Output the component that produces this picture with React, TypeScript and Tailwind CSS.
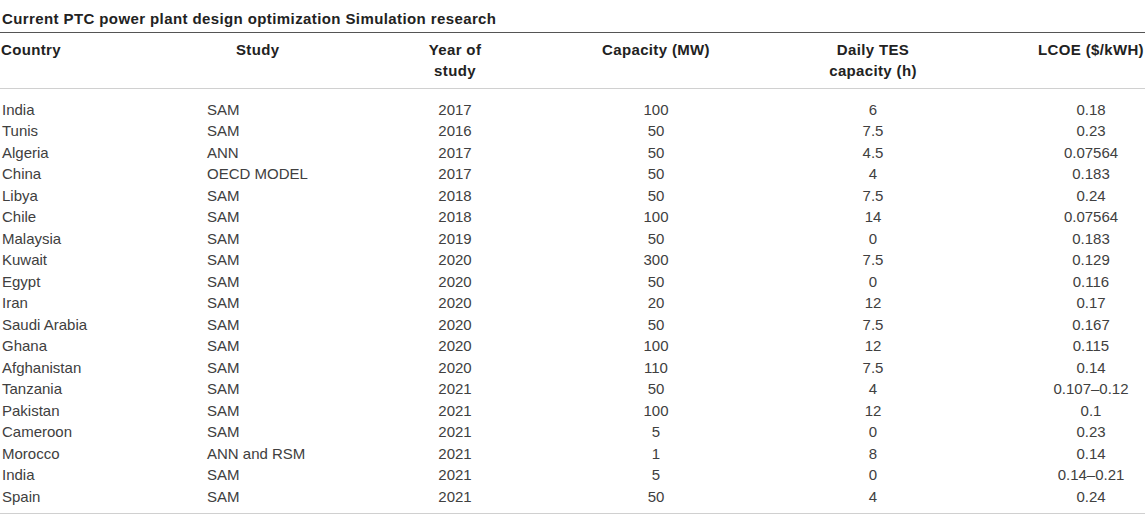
import React from "react";

const rows: string[][] = [
  ["India", "SAM", "2017", "100", "6", "0.18"],
  ["Tunis", "SAM", "2016", "50", "7.5", "0.23"],
  ["Algeria", "ANN", "2017", "50", "4.5", "0.07564"],
  ["China", "OECD MODEL", "2017", "50", "4", "0.183"],
  ["Libya", "SAM", "2018", "50", "7.5", "0.24"],
  ["Chile", "SAM", "2018", "100", "14", "0.07564"],
  ["Malaysia", "SAM", "2019", "50", "0", "0.183"],
  ["Kuwait", "SAM", "2020", "300", "7.5", "0.129"],
  ["Egypt", "SAM", "2020", "50", "0", "0.116"],
  ["Iran", "SAM", "2020", "20", "12", "0.17"],
  ["Saudi Arabia", "SAM", "2020", "50", "7.5", "0.167"],
  ["Ghana", "SAM", "2020", "100", "12", "0.115"],
  ["Afghanistan", "SAM", "2020", "110", "7.5", "0.14"],
  ["Tanzania", "SAM", "2021", "50", "4", "0.107–0.12"],
  ["Pakistan", "SAM", "2021", "100", "12", "0.1"],
  ["Cameroon", "SAM", "2021", "5", "0", "0.23"],
  ["Morocco", "ANN and RSM", "2021", "1", "8", "0.14"],
  ["India", "SAM", "2021", "5", "0", "0.14–0.21"],
  ["Spain", "SAM", "2021", "50", "4", "0.24"],
];

const grid = "grid grid-cols-[206px_174px_150px_252px_182px_181px]";

export default function App() {
  return (
    <div
      className="w-[1145px] h-[516px] bg-white overflow-hidden text-[15px] leading-[21.5px]"
      style={{ fontFamily: '"Liberation Sans", Arial, sans-serif' }}
    >
      <div className="pt-[8px] pb-[2px] pl-[2px] font-bold text-[#222] tracking-[0.4px]">
        Current PTC power plant design optimization Simulation research
      </div>
      <div className="border-t border-[#555]" />
      <div className={`${grid} pt-[6px] pb-[6px] font-bold text-[#222] tracking-[0.35px]`}>
        <div className="pl-[1px]">Country</div>
        <div className="pl-[30px]">Study</div>
        <div className="text-center">
          Year of
          <br />
          study
        </div>
        <div className="text-center">Capacity (MW)</div>
        <div className="text-center">
          Daily TES
          <br />
          capacity (h)
        </div>
        <div className="text-center pl-[73px]">LCOE ($/kWH)</div>
      </div>
      <div className="border-t border-[#d0d0d0]" />
      <div className="pt-[10px] pb-[6px] text-[#404040]">
        {rows.map((r, i) => (
          <div key={i} className={grid}>
            <div className="pl-[2px]">{r[0]}</div>
            <div className="pl-[1px]">{r[1]}</div>
            <div className="text-center">{r[2]}</div>
            <div className="text-center">{r[3]}</div>
            <div className="text-center">{r[4]}</div>
            <div className="text-center pl-[73px]">{r[5]}</div>
          </div>
        ))}
      </div>
      <div className="border-t border-[#d0d0d0]" />
    </div>
  );
}
